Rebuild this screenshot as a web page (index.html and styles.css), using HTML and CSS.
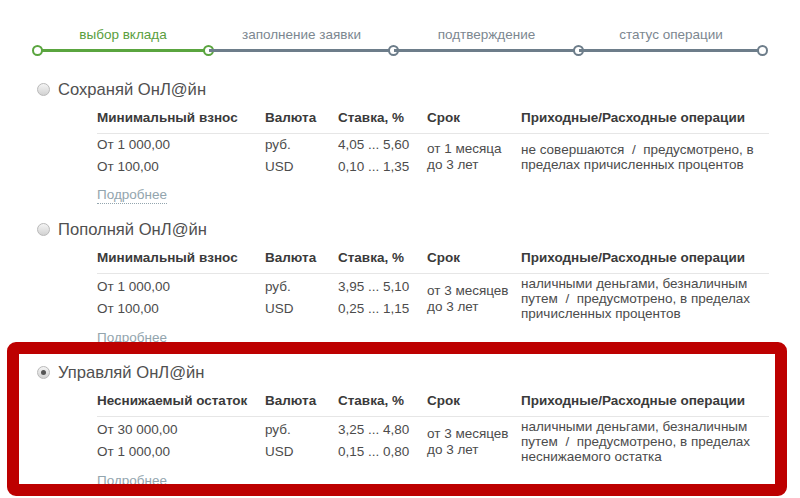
FILE: index.html
```html
<!DOCTYPE html>
<html lang="ru">
<head>
    <meta charset="UTF-8">
    <meta name="viewport" content="width=device-width, initial-scale=1.0">
    <title>Выбор вклада</title>
    <link rel="stylesheet" href="styles.css">
</head>
    <body>
        <div class="page">
            <div class="steps">
                <div class="step step-done step-first">
                    <span class="step-label">выбор вклада</span>
                    <span class="step-line"></span>
                </div>
                <div class="step step-wide">
                    <span class="step-label">заполнение заявки</span>
                    <span class="step-line"></span>
                </div>
                <div class="step step-wide">
                    <span class="step-label">подтверждение</span>
                    <span class="step-line"></span>
                </div>
                <div class="step step-last">
                    <span class="step-label">статус операции</span>
                    <span class="step-line"></span>
                </div>
            </div>

            <div class="deposit">
                <div class="deposit-title"><span class="radio"></span>Сохраняй ОнЛ@йн</div>
                <div class="deposit-table">
                    <div class="th">Минимальный взнос</div>
                    <div class="th">Валюта</div>
                    <div class="th">Ставка, %</div>
                    <div class="th">Срок</div>
                    <div class="th">Приходные/Расходные операции</div>
                    <div class="td td-rows">От 1 000,00<br>От 100,00</div>
                    <div class="td td-rows">руб.<br>USD</div>
                    <div class="td td-rows">4,05 ... 5,60<br>0,10 ... 1,35</div>
                    <div class="td td-term">от 1 месяца<br>до 3 лет</div>
                    <div class="td td-ops">не совершаются &nbsp;/&nbsp; предусмотрено, в пределах причисленных процентов</div>
                </div>
                <a href="#" class="more">Подробнее</a>
            </div>

            <div class="deposit">
                <div class="deposit-title"><span class="radio"></span>Пополняй ОнЛ@йн</div>
                <div class="deposit-table">
                    <div class="th">Минимальный взнос</div>
                    <div class="th">Валюта</div>
                    <div class="th">Ставка, %</div>
                    <div class="th">Срок</div>
                    <div class="th">Приходные/Расходные операции</div>
                    <div class="td td-rows">От 1 000,00<br>От 100,00</div>
                    <div class="td td-rows">руб.<br>USD</div>
                    <div class="td td-rows">3,95 ... 5,10<br>0,25 ... 1,15</div>
                    <div class="td td-term">от 3 месяцев<br>до 3 лет</div>
                    <div class="td td-ops">наличными деньгами, безналичным путем &nbsp;/&nbsp; предусмотрено, в пределах причисленных процентов</div>
                </div>
                <a href="#" class="more">Подробнее</a>
            </div>

            <div class="deposit">
                <div class="deposit-title"><span class="radio radio-checked"></span>Управляй ОнЛ@йн</div>
                <div class="deposit-table">
                    <div class="th">Неснижаемый остаток</div>
                    <div class="th">Валюта</div>
                    <div class="th">Ставка, %</div>
                    <div class="th">Срок</div>
                    <div class="th">Приходные/Расходные операции</div>
                    <div class="td td-rows">От 30 000,00<br>От 1 000,00</div>
                    <div class="td td-rows">руб.<br>USD</div>
                    <div class="td td-rows">3,25 ... 4,80<br>0,15 ... 0,80</div>
                    <div class="td td-term">от 3 месяцев<br>до 3 лет</div>
                    <div class="td td-ops">наличными деньгами, безналичным путем &nbsp;/&nbsp; предусмотрено, в пределах неснижаемого остатка</div>
                </div>
                <a href="#" class="more">Подробнее</a>
            </div>
        </div>
        <div class="highlight"></div>
    </body>
</html>
```

FILE: styles.css
```css
body
{
    margin: 0;
    font-family: 'Liberation Sans', Arial, sans-serif;
    font-size: 13.5px;
    color: #4c4c4c;
    background-color: white;
    overflow: hidden;
}
.page
{
    padding: 26px 0 0 37px;
}
/* progress */
.steps
{
    display: flex;
}
.step
{
    width: 172px;
    display: flex;
    flex-direction: column;
    align-items: center;
}
.step-wide
{
    width: 185px;
}
.step-last
{
    width: 184px;
}
.step-label
{
    line-height: 17px;
    color: #7c8790;
    margin-bottom: 6px;
}
.step-line
{
    position: relative;
    width: 100%;
    height: 3px;
    background: #6d7d8a;
}
.step-line::after,
.step-first .step-line::before
{
    content: "";
    position: absolute;
    top: -4px;
    right: -5px;
    width: 7px;
    height: 7px;
    border: 2px solid #6d7d8a;
    border-radius: 50%;
    background: white;
}
.step-first .step-line::before
{
    right: auto;
    left: -5px;
}
.step-done .step-label
{
    color: #5a9e3e;
}
.step-done .step-line
{
    background: #5aa53f;
}
.step-done .step-line::after,
.step-done .step-line::before
{
    border-color: #5aa53f;
}
/* deposits */
.deposit
{
    margin-top: 28px;
}
.deposit + .deposit
{
    margin-top: 16px;
}
.deposit-title
{
    display: flex;
    align-items: center;
    gap: 8px;
    font-size: 16.6px;
    line-height: 20px;
    color: #505050;
}
.radio
{
    width: 11px;
    height: 11px;
    border: 1px solid #b9b9b9;
    border-radius: 50%;
    background: linear-gradient(#f4f4f4, #d2d2d2);
    display: flex;
    align-items: center;
    justify-content: center;
    margin-top: -1px;
}
.radio-checked::after
{
    content: "";
    width: 5px;
    height: 5px;
    border-radius: 50%;
    background: #555;
}
.deposit-table
{
    display: grid;
    grid-template-columns: 168px 73px 89px 94px 248px;
    margin-left: 60px;
}
.th
{
    font-weight: bold;
    color: #3a3a3a;
    line-height: 18px;
    padding: 9px 0 6px;
    border-bottom: 1px solid #e6e6e6;
}
.td
{
    align-self: center;
}
.td-rows
{
    line-height: 22px;
}
.td-term
{
    line-height: 16px;
    padding-top: 2px;
}
.td-ops
{
    line-height: 15px;
    padding-top: 2px;
}
.more
{
    display: inline-block;
    margin: 9px 0 0 60px;
    line-height: 16px;
    color: #93a5ae;
    text-decoration: none;
    border-bottom: 1px dotted #93a5ae;
}
/* annotation frame */
.highlight
{
    position: absolute;
    left: 7px;
    top: 342px;
    width: 756px;
    height: 130px;
    border: 12px solid #bd0000;
    border-radius: 9px;
}
```
